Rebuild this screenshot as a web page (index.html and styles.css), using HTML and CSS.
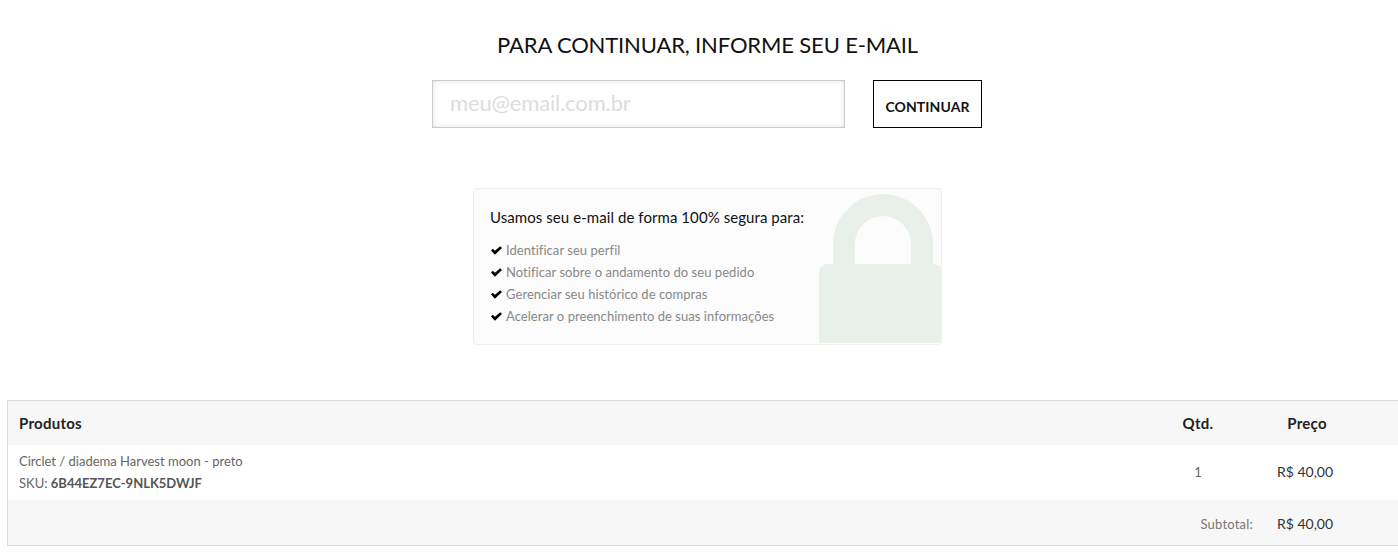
FILE: index.html
```html
<!DOCTYPE html>
<html lang="pt-BR">
<head>
  <meta charset="UTF-8">
  <title>Identificação</title>
  <link rel="stylesheet" href="styles.css">
</head>
<body>
  <div class="pagina">
    <h2 class="titulo">PARA CONTINUAR, INFORME SEU E-MAIL</h2>

    <form class="form-email">
      <input class="campo" type="text" placeholder="meu@email.com.br">
      <button class="btn" type="button">CONTINUAR</button>
    </form>

    <div class="seguranca">
      <svg class="cadeado" viewBox="0 0 123 149" aria-hidden="true">
        <path d="M14 72V50A50 50 0 0 1 114 50V72H92V50A28 28 0 0 0 36 50V72z"/>
        <path d="M0 79q0-9 9-9h105q9 0 9 9v70H0z"/>
      </svg>
      <p class="seguranca-titulo">Usamos seu e-mail de forma 100% segura para:</p>
      <ul class="lista">
        <li><svg class="check" viewBox="0 0 14 11"><path d="M0 5.500 2.300 3.200 5 5.900 11.700 0 14 2.300 5 11z"/></svg>Identificar seu perfil</li>
        <li><svg class="check" viewBox="0 0 14 11"><path d="M0 5.500 2.300 3.200 5 5.900 11.700 0 14 2.300 5 11z"/></svg>Notificar sobre o andamento do seu pedido</li>
        <li><svg class="check" viewBox="0 0 14 11"><path d="M0 5.500 2.300 3.200 5 5.900 11.700 0 14 2.300 5 11z"/></svg>Gerenciar seu histórico de compras</li>
        <li><svg class="check" viewBox="0 0 14 11"><path d="M0 5.500 2.300 3.200 5 5.900 11.700 0 14 2.300 5 11z"/></svg>Acelerar o preenchimento de suas informações</li>
      </ul>
    </div>

    <table class="produtos">
      <thead>
        <tr>
          <th class="col-nome">Produtos</th>
          <th class="col-qtd">Qtd.</th>
          <th class="col-preco">Preço</th>
        </tr>
      </thead>
      <tbody>
        <tr>
          <td class="col-nome">
            Circlet / diadema Harvest moon - preto<br>
            SKU: <span class="sku">6B44EZ7EC-9NLK5DWJF</span>
          </td>
          <td class="col-qtd">1</td>
          <td class="col-preco valor">R$ 40,00</td>
        </tr>
      </tbody>
      <tfoot>
        <tr>
          <td></td>
          <td class="subtotal">Subtotal:</td>
          <td class="col-preco valor">R$ 40,00</td>
        </tr>
      </tfoot>
    </table>
  </div>
</body>
</html>
```

FILE: styles.css
```css
html, body {
  overflow: hidden;
}
body {
  font-family: Lato, sans-serif;
  margin: 0;
  color: #666;
  background: #fff;
}
.pagina {
  width: 1415px;
}
.titulo {
  margin: 0;
  padding-top: 31px;
  font-size: 22px;
  line-height: 27px;
  font-weight: 400;
  letter-spacing: -.15px;
  color: #111;
  text-align: center;
}
.form-email {
  display: flex;
  justify-content: center;
  gap: 28px;
  margin-top: 22px;
  padding-right: 1px;
}
.campo {
  box-sizing: border-box;
  width: 413px;
  height: 48px;
  padding: 0 17px 4px;
  border: 1px solid #ccc;
  outline: none;
  font-family: Lato, sans-serif;
  font-size: 22px;
  letter-spacing: -.15px;
  color: #555;
  box-shadow: inset 0 0 5px rgba(0, 0, 0, .12);
}
.campo::placeholder {
  color: #ddd;
  opacity: 1;
}
.btn {
  box-sizing: border-box;
  width: 109px;
  height: 48px;
  padding: 4px 0 0;
  background: #fff;
  border: 1px solid #000;
  font-family: Lato, sans-serif;
  font-size: 14px;
  font-weight: 700;
  letter-spacing: .1px;
  color: #111;
}
.seguranca {
  box-sizing: border-box;
  position: relative;
  width: 469px;
  height: 157px;
  margin: 60px auto 0;
  padding: 18px 16px 0;
  background: #fcfcfc;
  border: 1px solid #eee;
  border-radius: 4px;
  overflow: hidden;
}
.cadeado {
  position: absolute;
  right: -1px;
  bottom: 1px;
  width: 123px;
  height: 149px;
  fill: #e9f0ea;
}
.seguranca-titulo {
  position: relative;
  margin: 0 0 12px;
  font-size: 15px;
  line-height: 20px;
  letter-spacing: .07px;
  color: #111;
}
.lista {
  position: relative;
  list-style: none;
  margin: 0;
  padding: 0;
  font-size: 13px;
  line-height: 22px;
  letter-spacing: .05px;
  color: #888;
}
.check {
  width: 11px;
  height: 9px;
  margin: 0 4px 0 1px;
  fill: #000;
}
.produtos {
  width: 1401px;
  margin: 55px 0 0 7px;
  border-collapse: collapse;
  border-top: 1px solid #ddd;
  border-bottom: 1px solid #ddd;
  border-left: 1px solid #ddd;
  font-size: 13px;
}
.produtos th {
  height: 44px;
  padding: 0;
  background: #f7f7f7;
  font-size: 15px;
  font-weight: 700;
  letter-spacing: .25px;
  color: #222;
  text-align: center;
}
.produtos td {
  padding: 0;
  text-align: center;
}
.produtos tbody td {
  height: 53px;
  padding-bottom: 2px;
  line-height: 22px;
}
.produtos tfoot td {
  height: 43px;
  padding-top: 2px;
  background: #f7f7f7;
}
.produtos .col-nome {
  padding-left: 11px;
  text-align: left;
}
.col-qtd {
  width: 110px;
}
.produtos .col-preco {
  width: 108px;
  padding-right: 47px;
}
.sku {
  font-weight: 700;
  color: #555;
}
.produtos .valor {
  width: 104px;
  padding-right: 51px;
  font-size: 14px;
  color: #333;
}
.produtos .subtotal {
  letter-spacing: .2px;
  text-align: right;
  color: #777;
}
```
